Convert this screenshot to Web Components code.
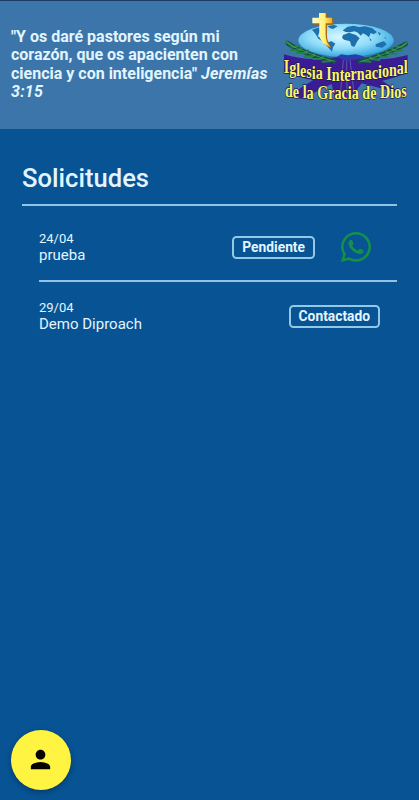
<!DOCTYPE html>
<html lang="es">
<head>
<meta charset="UTF-8">
<meta name="viewport" content="width=device-width, initial-scale=1">
<title>Solicitudes</title>
<style>
    html, body {
        margin: 0;
        height: 100%;
    }
    body {
        background: #075393;
        color: #e2f5ff;
        font-family: Roboto, "Liberation Sans", sans-serif;
        overflow: hidden;
    }
    i {
        letter-spacing: .22px;
    }
</style>
</head>
<body>
<app-pantalla>
    <app-cabecera slot="cabecera">"Y os daré pastores según mi corazón, que os apacienten con ciencia y con inteligencia" <i>Jeremías</i> <i>3:15</i></app-cabecera>
    <lista-solicitudes titulo="Solicitudes">
        <item-solicitud fecha="24/04" nombre="prueba" estado="Pendiente" contacto></item-solicitud>
        <item-solicitud fecha="29/04" nombre="Demo Diproach" estado="Contactado"></item-solicitud>
    </lista-solicitudes>
    <boton-perfil slot="flotante"></boton-perfil>
</app-pantalla>

<script>
// Estructura general: cabecera, contenido y boton flotante
class AppPantalla extends HTMLElement {
    constructor() {
        super();
        this.attachShadow({ mode: 'open' });
        this.shadowRoot.innerHTML = `
            <style>
                :host {
                    display: flex;
                    flex-direction: column;
                    height: 100%;
                    position: relative;
                }
                main {
                    flex: 1;
                    padding: 32px 22px 0;
                }
                .flotante {
                    position: absolute;
                    left: 11px;
                    bottom: 10px;
                }
            </style>
            <slot name="cabecera"></slot>
            <main><slot></slot></main>
            <div class="flotante"><slot name="flotante"></slot></div>
        `;
    }
}

// Logo de la iglesia
class LogoIglesia extends HTMLElement {
    constructor() {
        super();
        this.attachShadow({ mode: 'open' });
        this.shadowRoot.innerHTML = `
            <style>
                :host {
                    display: block;
                    width: 144px;
                    height: 110px;
                }
                svg {
                    display: block;
                    width: 100%;
                    height: 100%;
                }
                text {
                    font-family: "Liberation Serif", serif;
                    font-weight: bold;
                    fill: #fdf568;
                    stroke: #1d1c50;
                    stroke-width: 4px;
                    paint-order: stroke;
                    stroke-linejoin: round;
                }
            </style>
            <svg viewBox="0 0 432 330">
                <defs>
                    <radialGradient id="mar" cx="45%" cy="40%" r="62%">
                        <stop offset="0" stop-color="#d9f8ff"/>
                        <stop offset=".55" stop-color="#8fdcf8"/>
                        <stop offset="1" stop-color="#2fa4df"/>
                    </radialGradient>
                    <linearGradient id="oro" x1="0" x2="1" y1="0" y2="0">
                        <stop offset="0" stop-color="#fffbd0"/>
                        <stop offset=".6" stop-color="#fff17a"/>
                        <stop offset="1" stop-color="#f5a91c"/>
                    </linearGradient>
                </defs>
                <!-- manto -->
                <path fill="#3b1c94" d="M27 163Q110 190 212 166Q310 190 398 165L398 218Q350 236 322 242L392 290L345 272L260 250L225 298L180 298L170 252L80 296L36 290L115 240Q60 228 27 218Z"/>
                <path fill="none" stroke="#5d55b2" stroke-width="3" d="M205 180L196 285M215 180L216 290M225 180L238 285"/>
                <!-- globo -->
                <ellipse cx="213" cy="121" rx="143" ry="50" fill="url(#mar)"/>
                <g fill="#1e6fae">
                    <path d="M203 91L218 80L236 77L252 81L270 79L291 84L306 96L296 103L287 99L282 112L273 104L264 100L257 107L249 98L239 94L225 97L212 96Z"/>
                    <path d="M204 105L222 98L243 105L254 115L247 124L238 141L229 137L225 124L207 119L201 113Z"/>
                    <path d="M302 133L318 126L327 124L335 133L322 143L302 140ZM308 96L317 99L314 107ZM283 113L290 121L286 123ZM328 110L334 114L331 117Z"/>
                    <path d="M158 127L170 124L181 131L174 142L171 155L163 146L156 137ZM111 89L132 82L136 92L128 108L139 117L151 121L145 125L130 116L120 100Z"/>
                    <path d="M158 78L177 75L188 79L174 87L164 84Z"/>
                </g>
                <path fill="#293da6" d="M185 171L198 163L218 166L241 163L261 167L275 175L212 182Z"/>
                <!-- ramas de olivo -->
                <g fill="none" stroke-linecap="round">
                    <path stroke="#154e46" stroke-width="14" d="M39 130Q85 162 178 184M392 132Q330 166 254 185"/>
                    <path stroke="#238343" stroke-width="6" d="M34 124L54 142L70 138M48 150L75 151L80 144M66 158L94 159L99 151M90 170L115 168L119 161M116 177L139 176L145 169M143 185L165 183M396 127L379 141L363 140M382 151L359 153L350 145M363 161L337 160L334 153M338 170L316 171L308 162M313 180L290 177L285 171M286 185L265 183"/>
                    <path stroke="#53b162" stroke-width="2" d="M35 128Q90 161 178 184M394 131Q335 164 255 185"/>
                </g>
                <!-- cruz -->
                <path fill="#a56a18" d="M136 42L156 42L156 56L175 55L175 74L156 74L156 105Q155 124 170 143Q143 139 138 110L138 74L116 74L116 58L136 57Z"/>
                <path fill="url(#oro)" d="M132 39L152 39L152 53L171 53L171 70L152 70L152 103Q152 128 167 141Q136 132 133 105L133 70L112 70L112 53L132 53Z"/>
                <text id="linea1" transform="translate(26 0) scale(.755 1)" font-size="56"></text>
                <text id="linea2" transform="translate(30 0) scale(.744 1)" font-size="57"></text>
            </svg>
        `;
        this.curvar('linea1', 'Iglesia Internacional', 218, 24);
        this.curvar('linea2', 'de la Gracia de Dios', 292, 6);
    }

    // Baja las letras centrales para que el texto siga el arco del manto
    curvar(id, texto, base, flecha) {
        const el = this.shadowRoot.getElementById(id);
        const n = texto.length - 1;
        const ys = [...texto].map((_, i) => {
            const t = (i / n) * 2 - 1;
            return (base + flecha * (1 - t * t)).toFixed(1);
        });
        el.setAttribute('y', ys.join(' '));
        el.textContent = texto;
    }
}

// Franja superior con el versiculo y el logo
class AppCabecera extends HTMLElement {
    constructor() {
        super();
        this.attachShadow({ mode: 'open' });
        this.shadowRoot.innerHTML = `
            <style>
                :host {
                    display: flex;
                    align-items: flex-start;
                    box-sizing: border-box;
                    height: 129px;
                    background: #3b75a9;
                    border-top: 1px solid #1d3d68;
                }
                p {
                    flex: 1;
                    margin: 0;
                    padding: 26.6px 0 0 11px;
                    font-size: 16px;
                    line-height: 18.6px;
                    font-weight: bold;
                }
                logo-iglesia {
                    flex: none;
                    margin-top: -1px;
                }
            </style>
            <p><slot></slot></p>
            <logo-iglesia></logo-iglesia>
        `;
    }
}

// Lista con titulo
class ListaSolicitudes extends HTMLElement {
    constructor() {
        super();
        this.attachShadow({ mode: 'open' });
        this.shadowRoot.innerHTML = `
            <style>
                :host {
                    display: block;
                }
                h1 {
                    margin: 0;
                    height: 43px;
                    font-size: 25.6px;
                    line-height: 35px;
                    font-weight: 500;
                    border-bottom: 2px solid #92c3e4;
                    width: 375px;
                }
                .items {
                    padding: 8px 0 0 17px;
                    width: 358px;
                }
            </style>
            <h1></h1>
            <div class="items"><slot></slot></div>
        `;
    }

    connectedCallback() {
        this.shadowRoot.querySelector('h1').textContent = this.getAttribute('titulo');
    }
}

// Una solicitud: fecha, nombre, estado y enlace de WhatsApp
class ItemSolicitud extends HTMLElement {
    constructor() {
        super();
        this.attachShadow({ mode: 'open' });
        this.shadowRoot.innerHTML = `
            <style>
                :host {
                    display: flex;
                    align-items: center;
                    box-sizing: border-box;
                    height: 68px;
                    padding-right: 17px;
                }
                :host(:first-child) {
                    border-bottom: 2px solid #92c3e4;
                    padding-right: 26px;
                }
                .datos {
                    flex: 1;
                    line-height: 17px;
                }
                .fecha {
                    font-size: 13px;
                }
                .nombre {
                    font-size: 15px;
                }
                .estado {
                    box-sizing: border-box;
                    height: 23px;
                    padding: 0 8px;
                    border: 2px solid #92c9e6;
                    border-radius: 4.5px;
                    font-size: 13.8px;
                    line-height: 18px;
                    font-weight: bold;
                }
                svg {
                    width: 30px;
                    height: 30px;
                    margin-left: 26px;
                    fill: #15904a;
                }
                :host(:not([contacto])) svg {
                    display: none;
                }
            </style>
            <div class="datos">
                <div class="fecha"></div>
                <div class="nombre"></div>
            </div>
            <div class="estado"></div>
            <svg viewBox="0 32 448 448"><path d="M380.9 97.1C339 55.1 283.2 32 223.9 32c-122.4 0-222 99.6-222 222 0 39.1 10.2 77.3 29.6 111L0 480l117.7-30.9c32.4 17.7 68.9 27 106.1 27h.1c122.3 0 224.1-99.6 224.1-222 0-59.3-25.2-115-67.1-157zm-157 341.6c-33.2 0-65.7-8.9-94-25.7l-6.7-4-69.8 18.3L72 359.2l-4.4-7c-18.5-29.4-28.2-63.3-28.2-98.2 0-101.7 82.8-184.5 184.6-184.5 49.3 0 95.6 19.2 130.4 54.1 34.8 34.9 56.2 81.2 56.1 130.5 0 101.8-84.9 184.6-186.6 184.6zm101.2-138.2c-5.5-2.8-32.8-16.2-37.9-18-5.1-1.9-8.8-2.8-12.5 2.8-3.7 5.6-14.3 18-17.6 21.8-3.2 3.7-6.5 4.2-12 1.4-32.6-16.3-54-29.1-75.5-66-5.7-9.8 5.7-9.1 16.3-30.3 1.8-3.7.9-6.9-.5-9.7-1.4-2.8-12.5-30.1-17.1-41.2-4.5-10.8-9.1-9.3-12.5-9.5-3.2-.2-6.9-.2-10.6-.2-3.7 0-9.7 1.4-14.8 6.9-5.1 5.6-19.4 19-19.4 46.3 0 27.3 19.9 53.7 22.6 57.4 2.8 3.7 39.1 59.7 94.8 83.8 35.2 15.2 49 16.5 66.6 13.9 10.7-1.6 32.8-13.4 37.4-26.4 4.6-13 4.6-24.1 3.2-26.4-1.3-2.5-5-3.9-10.5-6.6z"/></svg>
        `;
    }

    connectedCallback() {
        for (const campo of ['fecha', 'nombre', 'estado']) {
            this.shadowRoot.querySelector('.' + campo).textContent = this.getAttribute(campo);
        }
    }
}

// Boton redondo del perfil
class BotonPerfil extends HTMLElement {
    constructor() {
        super();
        this.attachShadow({ mode: 'open' });
        this.shadowRoot.innerHTML = `
            <style>
                :host {
                    display: block;
                }
                button {
                    display: flex;
                    align-items: center;
                    justify-content: center;
                    box-sizing: border-box;
                    width: 60px;
                    height: 60px;
                    padding: 0 1px 1px 0;
                    border: none;
                    border-radius: 50%;
                    background: #fff442;
                    box-shadow: 0 2px 5px rgba(0, 20, 40, .4);
                }
                svg {
                    width: 29px;
                    height: 29px;
                    fill: #050500;
                }
            </style>
            <button type="button" aria-label="Perfil">
                <svg viewBox="0 0 24 24"><path d="M12 12c2.21 0 4-1.79 4-4s-1.79-4-4-4-4 1.79-4 4 1.79 4 4 4zm0 2c-2.67 0-8 1.34-8 4v2h16v-2c0-2.66-5.33-4-8-4z"/></svg>
            </button>
        `;
    }
}

customElements.define('app-pantalla', AppPantalla);
customElements.define('logo-iglesia', LogoIglesia);
customElements.define('app-cabecera', AppCabecera);
customElements.define('lista-solicitudes', ListaSolicitudes);
customElements.define('item-solicitud', ItemSolicitud);
customElements.define('boton-perfil', BotonPerfil);
</script>
</body>
</html>
